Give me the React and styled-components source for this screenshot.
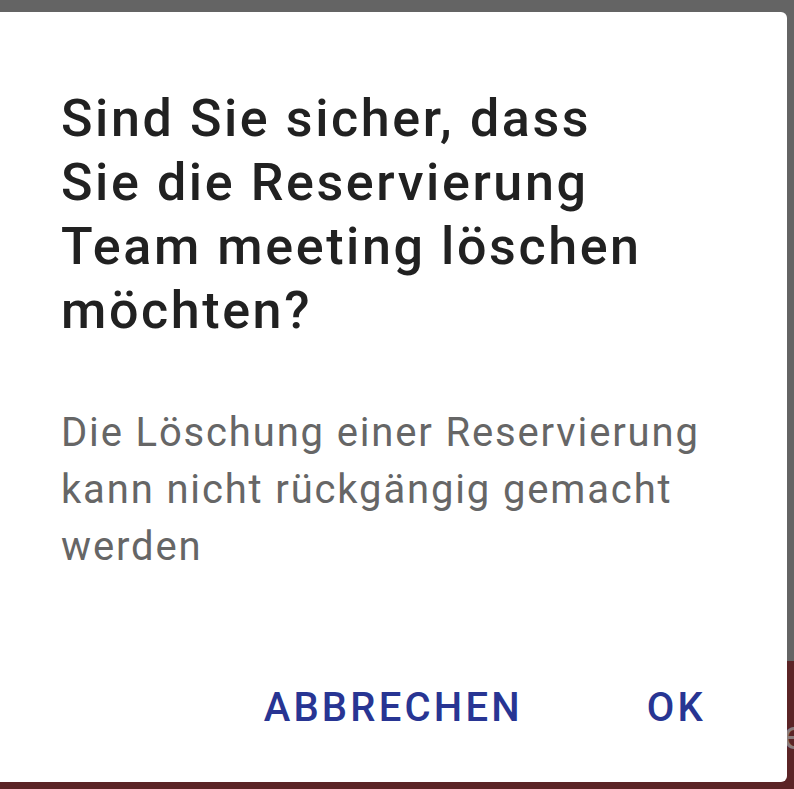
import React from 'react';
import styled, { createGlobalStyle } from 'styled-components';

const GlobalStyle = createGlobalStyle`
  html, body {
    margin: 0;
    padding: 0;
    background: #646464;
  }
  body {
    font-family: Roboto, "Noto Sans", "Liberation Sans", sans-serif;
    -webkit-font-smoothing: antialiased;
  }
`;

const Screen = styled.div`
  position: relative;
  width: 794px;
  height: 789px;
  overflow: hidden;
  background: linear-gradient(to bottom, #646464 0, #646464 661px, #5b2426 661px, #5b2426 100%);
  padding-top: 12px;
  box-sizing: border-box;
`;

// a bit of the app's text peeking out from under the dialog
const BehindText = styled.span`
  position: absolute;
  left: 783px;
  top: 712px;
  font-size: 40px;
  line-height: 48px;
  color: #8b7c7c;
`;

const Dialog = styled.section`
  position: relative;
  margin: 0 7px 0 -20px;
  height: 770px;
  box-sizing: border-box;
  background: #ffffff;
  border-radius: 6px;
  padding: 75px 0 0 81px;
  display: flex;
  flex-direction: column;
`;

const Title = styled.h2`
  margin: 0;
  font-size: 52px;
  font-weight: 500;
  line-height: 64px;
  letter-spacing: 2.6px;
  color: #212121;
`;

const Message = styled.p`
  margin: 61px 0 0;
  font-size: 40px;
  font-weight: 400;
  line-height: 57px;
  letter-spacing: 1.85px;
  color: #666666;
`;

const Actions = styled.div`
  margin-top: auto;
  margin-bottom: 50px;
  display: flex;
  justify-content: flex-end;
  gap: 124px;
  padding-right: 81px;
`;

const TextButton = styled.button`
  border: 0;
  background: transparent;
  padding: 0;
  font-family: inherit;
  font-size: 40px;
  font-weight: 500;
  line-height: 48px;
  letter-spacing: 3.2px;
  text-transform: uppercase;
  color: #283593;
  cursor: pointer;
`;

export default function App() {
  return (
    <>
      <GlobalStyle />
      <Screen>
        <BehindText>e</BehindText>
        <Dialog role="alertdialog">
          <Title>
            Sind Sie sicher, dass
            <br />
            Sie die Reservierung
            <br />
            Team meeting löschen
            <br />
            möchten?
          </Title>
          <Message>
            Die Löschung einer Reservierung
            <br />
            kann nicht rückgängig gemacht
            <br />
            werden
          </Message>
          <Actions>
            <TextButton>Abbrechen</TextButton>
            <TextButton>OK</TextButton>
          </Actions>
        </Dialog>
      </Screen>
    </>
  );
}
